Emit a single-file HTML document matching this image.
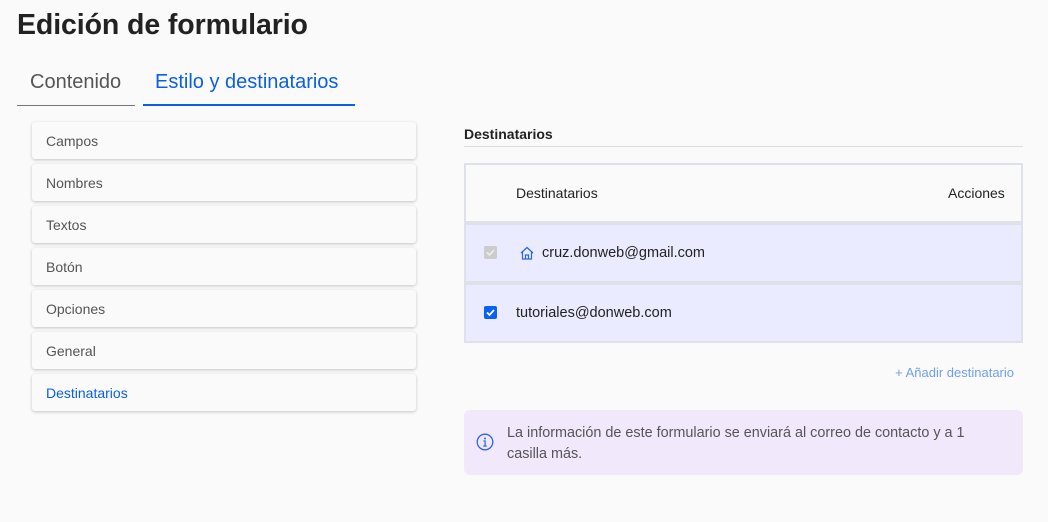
<!DOCTYPE html>
<html><head><meta charset="utf-8"><style>
*{box-sizing:border-box;margin:0;padding:0}
body{width:1048px;height:522px;background:#fafafa;font-family:"Liberation Sans",sans-serif;color:#333;position:relative;overflow:hidden}
.a{position:absolute;white-space:nowrap}
h1{position:absolute;left:17px;top:9px;font-size:28.5px;font-weight:bold;color:#222;letter-spacing:-0.1px}
.tab{position:absolute;top:71px;font-size:20px;height:35px}
.item{position:absolute;left:32px;width:384px;height:37px;background:#fafafa;border-radius:3px;box-shadow:0 1px 3px rgba(0,0,0,.22);font-size:14px;color:#555;padding:11px 14px}
.cb{position:absolute;left:484px;width:13px;height:13px;border-radius:2px}
</style></head><body>
<h1>Edición de formulario</h1>
<div class="tab" style="left:17px;width:118px;border-bottom:1px solid #777;color:#555;padding-left:13px">Contenido</div>
<div class="tab" style="left:143px;width:212px;border-bottom:2px solid #0a5fe6;color:#0a5fe6;padding-left:12px">Estilo y destinatarios</div>

<div class="item" style="top:122px">Campos</div>
<div class="item" style="top:164px">Nombres</div>
<div class="item" style="top:206px">Textos</div>
<div class="item" style="top:248px">Botón</div>
<div class="item" style="top:290px">Opciones</div>
<div class="item" style="top:332px">General</div>
<div class="item" style="top:374px;color:#0a5fe6">Destinatarios</div>

<div class="a" style="left:464px;top:126px;font-size:14px;font-weight:bold;color:#222">Destinatarios</div>
<div class="a" style="left:464px;top:146px;width:559px;height:1px;background:#ddd"></div>

<div class="a" style="left:464px;top:163px;width:559px;height:180px;background:#dfe1ea"></div>
<div class="a" style="left:466px;top:165px;width:555px;height:56px;background:#fafafa"></div>
<div class="a" style="left:516px;top:185px;font-size:14px;color:#222">Destinatarios</div>
<div class="a" style="left:948px;top:185px;font-size:14px;color:#222">Acciones</div>
<div class="a" style="left:466px;top:225px;width:555px;height:56px;background:#ebebff"></div>
<div class="a" style="left:466px;top:285px;width:555px;height:56px;background:#ebebff"></div>
<div class="cb" style="top:246px;background:#ccc"><svg width="13" height="13" viewBox="0 0 13 13"><path d="M3 6.5l2.5 2.5 4.5-5" stroke="#eee" stroke-width="1.6" fill="none"/></svg></div>
<svg class="a" style="left:519px;top:245px" width="16" height="16" viewBox="0 0 16 16"><path d="M2 8L8 2.5 14 8M3.5 7v7h9V7M6.5 14v-4h3v4" stroke="#2a66e0" stroke-width="1.2" fill="none"/></svg>
<div class="a" style="left:542px;top:245px;font-size:14.5px;color:#222">cruz.donweb@gmail.com</div>
<div class="cb" style="top:306px;background:#0a62f0"><svg width="13" height="13" viewBox="0 0 13 13"><path d="M3 6.5l2.5 2.5 4.5-5" stroke="#fff" stroke-width="1.8" fill="none"/></svg></div>
<div class="a" style="left:516px;top:305px;font-size:14.5px;color:#222">tutoriales@donweb.com</div>

<div class="a" style="right:34px;top:365px;font-size:13px;color:#6fa0f0">+ Añadir destinatario</div>

<div class="a" style="left:464px;top:410px;width:559px;height:65px;background:#f1e8fc;border-radius:6px"></div>
<svg class="a" style="left:476px;top:433px" width="18" height="18" viewBox="0 0 18 18"><circle cx="9" cy="9" r="7.8" stroke="#2a66e0" stroke-width="1.3" fill="none"/><circle cx="9" cy="5.5" r="1" fill="#2a66e0"/><path d="M7.5 8h1.6v5M7.3 13h3.4" stroke="#2a66e0" stroke-width="1.2" fill="none"/></svg>
<div class="a" style="left:507px;top:423px;font-size:14.4px;color:#555;line-height:21px">La información de este formulario se enviará al correo de contacto y a 1<br>casilla más.</div>
</body></html>
